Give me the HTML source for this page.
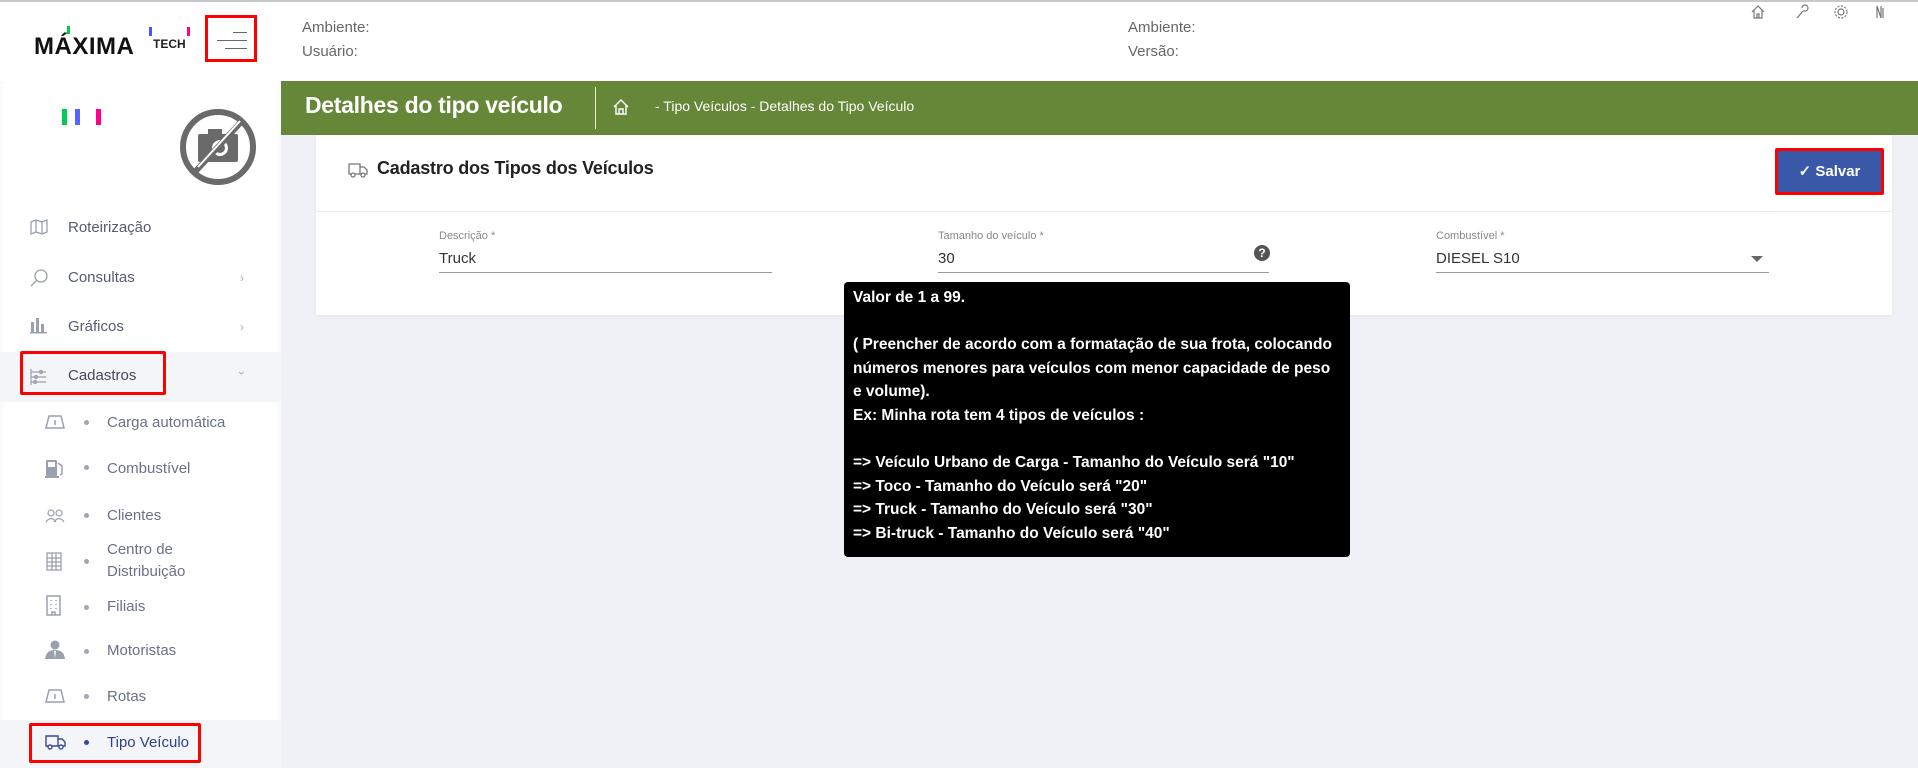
<!DOCTYPE html>
<html><head><meta charset="utf-8"><style>
*{margin:0;padding:0;box-sizing:border-box}
body{width:1918px;height:768px;overflow:hidden;background:#f0f1f6;font-family:"Liberation Sans",sans-serif;position:relative}
.a{position:absolute;white-space:nowrap}
.top{left:0;top:0;width:1918px;height:81px;background:#fff;border-top:2px solid #c8c8c8}
.side{left:0;top:81px;width:281px;height:687px;background:#fff;box-shadow:0 -4px 8px rgba(0,0,0,0.05) inset}
.hd{font-size:15px;color:#666}
.green{left:281px;top:81px;width:1637px;height:54px;background:#658737}
.card{left:316px;top:135px;width:1576px;height:180px;background:#fff;box-shadow:0 1px 3px rgba(0,0,0,.06)}
.mi{position:absolute;left:68px;font-size:15px;color:#555c70;line-height:20px;white-space:nowrap}
.si{position:absolute;left:107px;font-size:15px;color:#6a7188;line-height:22px;white-space:nowrap}
.dot{position:absolute;left:84px;width:5px;height:5px;border-radius:50%;background:#a0a6b6}
.ic{position:absolute;left:30px;color:#9aa0ad}
.sic{position:absolute;left:45px}
.chev{position:absolute;left:240px;font-size:12px;color:#aaa}
.lbl{font-size:11px;color:#888}
.val{font-size:15px;color:#333}
.ul{height:1px;background:#999}
.tip{left:844px;top:282px;width:506px;height:275px;background:#000;border-radius:4px;color:#fff;font-weight:bold;font-size:15.5px;line-height:23.6px;padding:4px 9px;white-space:normal}
</style></head><body>
<div class="a top"></div>
<div class="a" style="left:34px;top:33px;font-size:24px;font-weight:bold;color:#111;letter-spacing:0.5px">MÁXIMA</div>
<div class="a" style="left:67px;top:26px;width:3px;height:8px;background:#0c4"></div>
<div class="a" style="left:149px;top:27px;width:3px;height:9px;background:#45f"></div>
<div class="a" style="left:187px;top:27px;width:3px;height:9px;background:#f08"></div>
<div class="a" style="left:153px;top:37px;font-size:12px;font-weight:bold;color:#222">TECH</div>
<div class="a" style="left:205px;top:15px;width:52px;height:47px;border:3px solid #f00"></div>
<div class="a" style="left:233px;top:32px;width:14px;height:1px;background:#667"></div>
<div class="a" style="left:217px;top:40px;width:30px;height:1px;background:#667"></div>
<div class="a" style="left:225px;top:48px;width:22px;height:1px;background:#667"></div>
<div class="a hd" style="left:302px;top:19px">Ambiente:</div>
<div class="a hd" style="left:302px;top:43px">Usuário:</div>
<div class="a hd" style="left:1128px;top:19px">Ambiente:</div>
<div class="a hd" style="left:1128px;top:43px">Versão:</div>
<svg class="a" style="left:1750px;top:2px" width="160" height="20" fill="none" stroke="#777" stroke-width="1.2">
<path d="M2 10 L8 4 L14 10 M4 8 V16 H12 V8 M7 16 V12 H9 V16"/>
<path d="M47 16 L53 9 M52 6 a3 3 0 1 1 3 3 L53 9"/>
<circle cx="91" cy="10" r="3"/><circle cx="91" cy="10" r="6" stroke-dasharray="2 1.5"/>
<path d="M127 4 V16 M131 4 V16 M127 4 L131 16 M133 6 V16"/>
</svg>
<div class="a side">
<div class="a" style="left:62px;top:28px;width:5px;height:16px;background:#0c5"></div>
<div class="a" style="left:75px;top:28px;width:5px;height:16px;background:#56f"></div>
<div class="a" style="left:96px;top:28px;width:5px;height:16px;background:#f08"></div>
<svg class="a" style="left:178px;top:26px" width="80" height="80"><circle cx="40" cy="40" r="35" fill="none" stroke="#6a6a6a" stroke-width="6"/><rect x="20" y="27" width="40" height="28" rx="2" fill="#6a6a6a"/><rect x="30" y="22" width="14" height="6" fill="#6a6a6a"/><circle cx="42" cy="41" r="8" fill="#fff"/><circle cx="42" cy="41" r="5" fill="#6a6a6a"/><line x1="16" y1="66" x2="64" y2="14" stroke="#6a6a6a" stroke-width="6"/><line x1="20" y1="60" x2="62" y2="14" stroke="#fff" stroke-width="2"/></svg>
<div class="a" style="left:0;top:271px;width:281px;height:50px;background:#f4f5f8"></div>
<div class="a" style="left:0;top:639px;width:281px;height:48px;background:#f4f5f8"></div>
</div>
<div class="a" style="left:0;top:0;width:281px;height:768px">
<svg class="ic" style="top:219px" width="18" height="16" fill="none" stroke="#9aa0ad" stroke-width="1.3"><path d="M1 3 L6 1 L12 3 L17 1 V13 L12 15 L6 13 L1 15 Z M6 1 V13 M12 3 V15"/></svg>
<div class="mi" style="top:218px">Roteirização</div>
<svg class="ic" style="top:269px" width="18" height="18" fill="none" stroke="#9aa0ad" stroke-width="1.3"><circle cx="11" cy="7" r="6"/><path d="M7 11 L1 17"/></svg>
<div class="mi" style="top:268px">Consultas</div><div class="chev" style="top:271px">&#8250;</div>
<svg class="ic" style="top:316px" width="18" height="18" fill="#9aa0ad"><rect x="1" y="6" width="3" height="11"/><rect x="6" y="2" width="3" height="15"/><rect x="11" y="8" width="3" height="9"/><rect x="0" y="16" width="17" height="1.5"/></svg>
<div class="mi" style="top:317px">Gráficos</div><div class="chev" style="top:320px">&#8250;</div>
<svg class="ic" style="top:368px" width="18" height="18" fill="none" stroke="#9aa0ad" stroke-width="1.2"><path d="M1 1 V17 M1 4 H16 M1 9 H16 M1 14 H16"/><circle cx="6" cy="9" r="1.5"/><circle cx="11" cy="4" r="1.5"/><circle cx="5" cy="14" r="1.5"/></svg>
<div class="mi" style="top:366px;color:#444a5c">Cadastros</div><div class="chev" style="top:366px;transform:rotate(90deg)">&#8250;</div>
<div class="a" style="left:20px;top:351px;width:146px;height:44px;border:3px solid #f00;border-radius:2px"></div>

<svg class="sic" style="top:414px" width="20" height="16" fill="none" stroke="#9aa0ad" stroke-width="1.5"><path d="M4 2 H16 L19 14 H1 Z M10 6 V11"/></svg>
<div class="dot" style="top:420px"></div><div class="si" style="top:412px">Carga automática</div>
<svg class="sic" style="top:459px" width="20" height="20" fill="#9aa0ad"><rect x="1" y="1" width="11" height="16" rx="1"/><rect x="3" y="3" width="7" height="5" fill="#fff"/><path d="M13 4 L17 7 V15 L15 16" stroke="#9aa0ad" fill="none" stroke-width="1.5"/><rect x="0" y="17" width="14" height="2"/></svg>
<div class="dot" style="top:465px"></div><div class="si" style="top:458px">Combustível</div>
<svg class="sic" style="top:509px" width="20" height="14" fill="none" stroke="#9aa0ad" stroke-width="1.2"><circle cx="6" cy="4" r="3"/><circle cx="14" cy="4" r="3"/><path d="M1 13 Q6 6 11 13 M9 13 Q14 6 19 13"/></svg>
<div class="dot" style="top:513px"></div><div class="si" style="top:505px">Clientes</div>
<svg class="sic" style="top:552px" width="18" height="20" fill="none" stroke="#9aa0ad" stroke-width="1.3"><rect x="2" y="1" width="14" height="17"/><path d="M2 6 H16 M2 10 H16 M2 14 H16 M7 1 V18 M11 1 V18"/></svg>
<div class="dot" style="top:559px"></div><div class="si" style="top:539px">Centro de<br>Distribuição</div>
<svg class="sic" style="top:595px" width="18" height="22" fill="none" stroke="#9aa0ad" stroke-width="1.5"><rect x="2" y="1" width="13" height="19"/><path d="M6 5 V6 M11 5 V6 M6 9 V10 M11 9 V10 M6 13 V14 M11 13 V14 M7 20 V17 H10 V20"/></svg>
<div class="dot" style="top:605px"></div><div class="si" style="top:596px">Filiais</div>
<svg class="sic" style="top:640px" width="20" height="20" fill="#9aa0ad"><circle cx="10" cy="5" r="4.5"/><path d="M0 19 Q1 10 10 10 Q19 10 20 19 Z"/><path d="M9 11 L10 18 L11 11 Z" fill="#fff"/></svg>
<div class="dot" style="top:649px"></div><div class="si" style="top:640px">Motoristas</div>
<svg class="sic" style="top:688px" width="20" height="16" fill="none" stroke="#9aa0ad" stroke-width="1.5"><path d="M4 2 H16 L19 14 H1 Z M10 6 V11"/></svg>
<div class="dot" style="top:694px"></div><div class="si" style="top:686px">Rotas</div>
<svg class="sic" style="top:734px" width="22" height="16" fill="none" stroke="#3a4a90" stroke-width="1.4"><path d="M1 2 H13 V12 H1 Z M13 5 H17 L20 8 V12 H13"/><circle cx="5" cy="13" r="2" fill="#fff"/><circle cx="16" cy="13" r="2" fill="#fff"/></svg>
<div class="dot" style="top:740px;background:#3a4a90"></div><div class="si" style="top:732px;color:#2f3f8a">Tipo Veículo</div>
<div class="a" style="left:29px;top:723px;width:172px;height:40px;border:3px solid #f00;border-radius:2px"></div>
</div>
<div class="a green"></div>
<div class="a" style="left:305px;top:92px;font-size:23px;font-weight:bold;color:#fff;letter-spacing:-0.3px">Detalhes do tipo veículo</div>
<div class="a" style="left:595px;top:87px;width:1px;height:42px;background:#e6ecd8"></div>
<svg class="a" style="left:613px;top:99px" width="16" height="16" fill="none" stroke="#fff" stroke-width="1.4"><path d="M1 8 L8 1 L15 8 M3 6 V15 H13 V6 M6 15 V10 H10 V15"/></svg>
<div class="a" style="left:655px;top:98px;font-size:14px;color:#fff">- Tipo Veículos - Detalhes do Tipo Veículo</div>
<div class="a card"></div>
<svg class="a" style="left:348px;top:162px" width="20" height="16" fill="none" stroke="#777" stroke-width="1.3"><path d="M1 2 H12 V12 H1 Z M12 5 H16 L19 8 V12 H12"/><circle cx="5" cy="13" r="2" fill="#fff"/><circle cx="15" cy="13" r="2" fill="#fff"/></svg>
<div class="a" style="left:377px;top:158px;font-size:18px;font-weight:bold;color:#222;letter-spacing:-0.2px">Cadastro dos Tipos dos Veículos</div>
<div class="a" style="left:1775px;top:148px;width:109px;height:47px;border:3px solid #f00;border-radius:2px;background:#3a58a8;color:#fff;font-size:15px;font-weight:bold;text-align:center;line-height:41px">&#10003; Salvar</div>
<div class="a" style="left:316px;top:211px;width:1576px;height:1px;background:#e8e9ee"></div>
<div class="a lbl" style="left:439px;top:230px">Descrição *</div>
<div class="a val" style="left:439px;top:250px">Truck</div>
<div class="a ul" style="left:439px;top:272px;width:333px"></div>
<div class="a lbl" style="left:938px;top:230px">Tamanho do veículo *</div>
<div class="a val" style="left:938px;top:250px">30</div>
<div class="a ul" style="left:938px;top:272px;width:331px"></div>
<div class="a" style="left:1254px;top:245px;width:16px;height:16px;border-radius:50%;background:#555;color:#fff;font-size:12px;font-weight:bold;text-align:center;line-height:16px">?</div>
<div class="a lbl" style="left:1436px;top:230px">Combustível *</div>
<div class="a val" style="left:1436px;top:250px">DIESEL S10</div>
<div class="a ul" style="left:1436px;top:272px;width:333px"></div>
<div class="a" style="left:1751px;top:256px;width:0;height:0;border-left:6px solid transparent;border-right:6px solid transparent;border-top:6px solid #666"></div>
<div class="a tip">Valor de 1 a 99.<br><br>( Preencher de acordo com a formatação de sua frota, colocando números menores para veículos com menor capacidade de peso e volume).<br>Ex: Minha rota tem 4 tipos de veículos :<br><br>=&gt; Veículo Urbano de Carga - Tamanho do Veículo será "10"<br>=&gt; Toco - Tamanho do Veículo será "20"<br>=&gt; Truck - Tamanho do Veículo será "30"<br>=&gt; Bi-truck - Tamanho do Veículo será "40"</div>
</body></html>
